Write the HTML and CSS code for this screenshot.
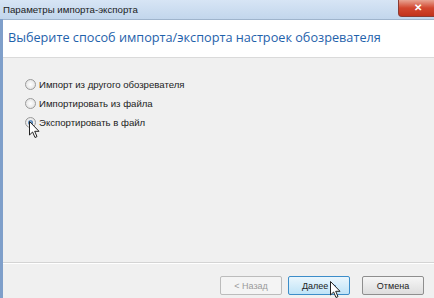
FILE: index.html
```html
<!DOCTYPE html>
<html lang="ru">
<head>
    <meta charset="UTF-8">
    <title>Параметры импорта-экспорта</title>
    <link rel="stylesheet" href="styles.css">
</head>
<body>
    <div class="window">
        <div class="titlebar">
            <span class="title">Параметры импорта-экспорта</span>
            <span class="close-btn">&#x2715;</span>
        </div>
        <div class="client">
            <div class="header">Выберите способ импорта/экспорта настроек обозревателя</div>
            <div class="options">
                <label class="option"><span class="radio"></span>Импорт из другого обозревателя</label>
                <label class="option"><span class="radio"></span>Импортировать из файла</label>
                <label class="option"><span class="radio checked"></span>Экспортировать в файл</label>
            </div>
            <div class="footer">
                <button class="btn" disabled>&lt; Назад</button>
                <button class="btn default">Далее &gt;</button>
                <button class="btn cancel">Отмена</button>
            </div>
        </div>
    </div>

    <!-- mouse pointers caught in the screenshot -->
    <svg class="cursor cursor-radio" width="12" height="18" viewBox="0 0 12 18">
        <path d="M0.5 0.5 L0.5 14 L3.6 11 L6 16.5 L8 15.6 L5.7 10.3 L10 10.3 Z" fill="#fff" stroke="#222" stroke-width="1"/>
    </svg>
    <svg class="cursor cursor-next" width="12" height="18" viewBox="0 0 12 18">
        <path d="M0.5 0.5 L0.5 14 L3.6 11 L6 16.5 L8 15.6 L5.7 10.3 L10 10.3 Z" fill="#fff" stroke="#222" stroke-width="1"/>
    </svg>
</body>
</html>
```

FILE: styles.css
```css
body {
    margin: 0;
    width: 434px;
    height: 298px;
    overflow: hidden;
    background-color: #f0f0f0;
    font-family: "Liberation Sans", Arial, sans-serif;
}

.window {
    display: flex;
    flex-direction: column;
    height: 298px;
}

.titlebar {
    display: flex;
    justify-content: space-between;
    align-items: flex-start;
    height: 19px;
    background: linear-gradient(#d7e5f5, #c2d6ec);
}

.title {
    padding: 4px 0 0 3px;
    font-size: 9.7px;
    color: #1b1b1b;
}

.close-btn {
    width: 38px;
    height: 16px;
    margin-right: -4px;
    border: 1px solid #8a3b33;
    border-top: none;
    border-radius: 0 0 4px 4px;
    background: linear-gradient(#e8a493, #d2472f 50%, #c2321c);
    color: #fff;
    font-size: 10px;
    font-weight: bold;
    line-height: 16px;
    text-align: center;
}

.client {
    flex: 1;
    display: flex;
    flex-direction: column;
    border-left: 3px solid #7f9fca;
    background-color: #f0f0f0;
}

.header {
    height: 39px;
    padding: 8px 0 0 5px;
    box-sizing: border-box;
    border-top: 1px solid #9fb4cc;
    border-bottom: 1px solid #dadada;
    background-color: #fff;
    color: #1f62ab;
    font-family: "Open Sans", sans-serif;
    font-size: 12.7px;
}

.options {
    flex: 1;
    display: flex;
    flex-direction: column;
    gap: 6px;
    padding: 20px 0 0 22px;
}

.option {
    display: flex;
    align-items: center;
    gap: 3px;
    height: 13px;
    font-size: 9.6px;
    color: #222;
}

.radio {
    width: 9px;
    height: 9px;
    border: 1px solid #9a9a9a;
    border-radius: 50%;
    background: radial-gradient(#fff, #dcdcdc);
    position: relative;
}

.radio.checked::after {
    content: "";
    position: absolute;
    left: 2px;
    top: 2px;
    width: 5px;
    height: 5px;
    border-radius: 50%;
    background: radial-gradient(circle at 40% 35%, #8fb7e0, #1f4f86);
}

.footer {
    display: flex;
    justify-content: flex-end;
    gap: 6px;
    height: 36px;
    padding: 13px 10px 0 0;
    box-sizing: border-box;
    border-top: 1px solid #d4d4d4;
    box-shadow: inset 0 1px 0 #fff;
}

.btn {
    width: 62px;
    height: 19px;
    padding: 0;
    border: 1px solid #8e8e8e;
    border-radius: 2px;
    background: linear-gradient(#f6f6f6, #dddddd);
    font-family: "Liberation Sans", Arial, sans-serif;
    font-size: 9px;
    color: #222;
}

.btn:disabled {
    border-color: #bcbcbc;
    background: #f4f4f4;
    color: #9a9a9a;
}

.btn.default {
    border-color: #3c8dc9;
    background: linear-gradient(#eaf6fd, #bfe3f7);
}

.btn.cancel {
    margin-left: 6px;
}

.cursor {
    position: absolute;
}

.cursor-radio {
    left: 29px;
    top: 121px;
}

.cursor-next {
    left: 330px;
    top: 281px;
}
```
